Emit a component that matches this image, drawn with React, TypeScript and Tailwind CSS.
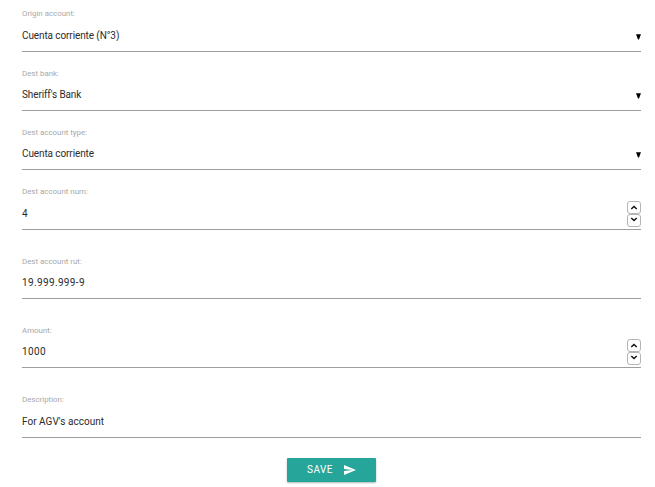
import React, { useState } from 'react';
import clsx from 'clsx';

type FieldKind = 'select' | 'number' | 'text';

interface Field {
  label: string;
  value: string;
  kind: FieldKind;
  spacing: string;
  valueClass?: string;
  labelClass?: string;
}

const initialFields: Field[] = [
  { label: 'Origin account:', value: 'Cuenta corriente (N°3)', kind: 'select', spacing: 'mb-4', valueClass: 'tracking-[-0.1px]' },
  { label: 'Dest bank:', value: "Sheriff's Bank", kind: 'select', spacing: 'mb-4', valueClass: 'tracking-[-0.12px]', labelClass: 'pt-px' },
  { label: 'Dest account type:', value: 'Cuenta corriente', kind: 'select', spacing: 'mb-[17px]', valueClass: 'tracking-[-0.1px]', labelClass: 'pt-px' },
  { label: 'Dest account num:', value: '4', kind: 'number', spacing: 'mb-[26px]' },
  { label: 'Dest account rut:', value: '19.999.999-9', kind: 'text', spacing: 'mb-[26px]', valueClass: 'tracking-[0.36px]', labelClass: 'pt-px' },
  { label: 'Amount:', value: '1000', kind: 'number', spacing: 'mb-[27px]', valueClass: 'tracking-[0.4px]', labelClass: 'pt-px' },
  { label: 'Description:', value: "For AGV's account", kind: 'text', spacing: 'mb-5', valueClass: 'tracking-[0.03px]' },
];

function Spinner({ onStep }: { onStep: (delta: number) => void }) {
  return (
    <div className="mt-[2px] flex w-[14px] flex-col">
      <button
        type="button"
        aria-label="Increase"
        onClick={() => onStep(1)}
        className="flex h-[13px] w-[14px] items-center justify-center rounded-[3px] border border-[#b4b4b4] bg-white"
      >
        <svg width="8" height="5" viewBox="0 0 8 5" fill="none" stroke="#111" strokeWidth="1.5">
          <path d="M1.3 4 L4 1.5 L6.7 4" />
        </svg>
      </button>
      <button
        type="button"
        aria-label="Decrease"
        onClick={() => onStep(-1)}
        className="flex h-[13px] w-[14px] items-start justify-center rounded-[3px] border border-[#b4b4b4] bg-white pt-[2px]"
      >
        <svg width="8" height="5" viewBox="0 0 8 5" fill="none" stroke="#111" strokeWidth="1.5">
          <path d="M1.3 1 L4 3.5 L6.7 1" />
        </svg>
      </button>
    </div>
  );
}

export default function App() {
  const [fields, setFields] = useState<Field[]>(initialFields);

  const updateField = (index: number, value: string) => {
    setFields(fields.map((field, i) => (i === index ? { ...field, value } : field)));
  };

  return (
    <div className="h-[487px] overflow-hidden bg-white font-['Roboto',sans-serif]">
      <form className="flex flex-col pt-[9px] pr-[14px] pl-[22px]" onSubmit={(e) => e.preventDefault()}>
        {fields.map((field, index) => (
          <div
            key={field.label}
            className={clsx('flex h-[43px] flex-col border-b border-[#9e9e9e]', field.spacing)}
          >
            <label className={clsx('h-[10px] text-[7.9px] leading-[10px] text-[#a8a8a8]', field.labelClass)}>
              {field.label}
            </label>
            <div className="flex h-8 items-center">
              <input
                value={field.value}
                readOnly={field.kind === 'select'}
                onChange={(e) => updateField(index, e.target.value)}
                className={clsx(
                  'h-8 min-w-0 flex-1 bg-transparent text-[10px] text-[#2b2b2b] outline-none',
                  field.valueClass
                )}
              />
              {field.kind === 'select' && (
                <svg className="mt-1" width="5" height="6" viewBox="0 0 5 6">
                  <path d="M0 0.3 H5 L3 5.6 H2 Z" fill="#000" />
                </svg>
              )}
              {field.kind === 'number' && (
                <Spinner onStep={(delta) => updateField(index, String(Number(field.value) + delta))} />
              )}
            </div>
          </div>
        ))}

        <button
          type="submit"
          className="ml-[265px] flex h-6 w-[89px] items-center rounded-[1px] bg-[#26a69a] pl-5 text-white shadow-[0_1px_2px_rgba(0,0,0,0.3)]"
        >
          <span className="w-[37px] text-left text-[10px] leading-6 tracking-[0.45px]">SAVE</span>
          <svg width="12" height="10" viewBox="0 0 21 18" fill="#fff" preserveAspectRatio="none">
            <path d="M0.01 18 L21 9 L0.01 0 L0 7 L15 9 L0 11 Z" />
          </svg>
        </button>
      </form>
    </div>
  );
}
